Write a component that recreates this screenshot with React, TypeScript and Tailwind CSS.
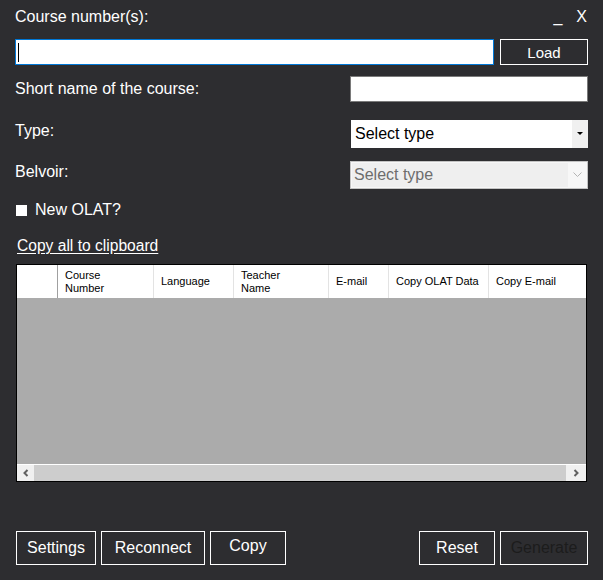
const font = { fontFamily: '"Liberation Sans", Arial, sans-serif' };

type Col = { label: string[]; w: string };

const columns: Col[] = [
  { label: ["Course", "Number"], w: "w-[96px]" },
  { label: ["Language"], w: "w-[80px]" },
  { label: ["Teacher", "Name"], w: "w-[95px]" },
  { label: ["E-mail"], w: "w-[60px]" },
  { label: ["Copy OLAT Data"], w: "w-[100px]" },
  { label: ["Copy E-mail"], w: "flex-1" },
];

function CourseGrid() {
  return (
    <div className="mt-[8px] ml-[1px] mr-[1px] flex h-[218px] flex-col border border-black bg-[#ababab]">
      <div className="flex h-[33px] bg-white text-[11px] leading-[13px] text-black">
        <div className="w-[41px] border-r border-[#a0a0a0]" />
        {columns.map((c) => (
          <div
            key={c.label.join(" ")}
            className={`${c.w} flex flex-col justify-center border-r border-[#e3e3e3] pl-[7px] last:border-r-0`}
          >
            {c.label.map((l) => (
              <span key={l}>{l}</span>
            ))}
          </div>
        ))}
      </div>
      <div className="flex-1" />
      <div className="h-px bg-white" />
      <div className="flex h-[16px] bg-[#cdcdcd]">
        <div className="flex w-[17px] items-center justify-center bg-[#f0f0f0]">
          <svg width="8" height="8" viewBox="0 0 8 8">
            <path d="M5.5 1 L2.5 4 L5.5 7" fill="none" stroke="#606060" strokeWidth="2" />
          </svg>
        </div>
        <div className="flex-1" />
        <div className="flex w-[20px] items-center justify-center bg-[#f0f0f0]">
          <svg width="8" height="8" viewBox="0 0 8 8">
            <path d="M2.5 1 L5.5 4 L2.5 7" fill="none" stroke="#606060" strokeWidth="2" />
          </svg>
        </div>
      </div>
    </div>
  );
}

function Btn({ children, w, dim, lift }: { children: string; w: string; dim?: boolean; lift?: boolean }) {
  return (
    <div
      className={`${w} flex h-[34px] items-center justify-center border border-white text-[16px] ${
        dim ? "text-[#1c1c1c]" : "text-white"
      } ${lift ? "pb-[4px]" : ""}`}
    >
      {children}
    </div>
  );
}

export default function App() {
  return (
    <div
      className="flex h-[580px] w-[603px] flex-col bg-[#2d2d30] pl-[15px] pr-[15px] text-[16px] leading-[20px] text-white"
      style={font}
    >
      <div className="mt-[7px] flex h-[20px] items-center justify-between">
        <span>Course number(s):</span>
        <div className="flex items-center gap-[14px] pr-[1px]">
          <span>_</span>
          <span>X</span>
        </div>
      </div>

      <div className="mt-[12px] flex h-[26px] gap-[6px]">
        <div className="flex flex-1 items-center border border-[#0078d7] bg-white pl-[2px]">
          <div className="h-[19px] w-px bg-black" />
        </div>
        <div className="flex w-[88px] items-center justify-center border border-white pt-[2px] text-[15px]">
          Load
        </div>
      </div>

      <div className="mt-[11px] flex h-[26px] items-center justify-between">
        <span>Short name of the course:</span>
        <div className="h-[26px] w-[238px] border border-[#7a7a7a] bg-white" />
      </div>

      <div className="mt-[18px] flex h-[28px] justify-between">
        <span className="mt-[1px]">Type:</span>
        <div className="flex w-[237px] bg-white">
          <span className="flex-1 pl-[4px] pt-[4px] text-black">Select type</span>
          <div className="flex w-[16px] items-center justify-center bg-[#f0f0f0]">
            <svg width="6" height="4" viewBox="0 0 6 4">
              <path d="M0 0 H6 L3 3 Z" fill="#000" />
            </svg>
          </div>
        </div>
      </div>

      <div className="mt-[13px] flex h-[28px] justify-between">
        <span className="mt-[1px]">Belvoir:</span>
        <div className="flex w-[238px] border border-[#c3c3c3] bg-[#f7f7f7] p-[1px]">
          <span className="w-[216px] bg-[#efefef] pl-[2px] pt-[2px] text-[#6d6d6d]">Select type</span>
          <div className="flex flex-1 items-center justify-center">
            <svg width="9" height="6" viewBox="0 0 9 6">
              <path d="M0.5 0.5 L4.5 4.5 L8.5 0.5" fill="none" stroke="#b4b4b4" strokeWidth="1" />
            </svg>
          </div>
        </div>
      </div>

      <div className="mt-[11px] flex h-[20px] items-center">
        <div className="ml-[1px] h-[11px] w-[11px] bg-white" />
        <span className="ml-[8px]">New OLAT?</span>
      </div>

      <div className="mt-[16px] h-[20px] pl-[2px]">
        <span className="text-[15.6px] underline underline-offset-[2px]">Copy all to clipboard</span>
      </div>

      <CourseGrid />

      <div className="mt-[49px] flex justify-between pl-[1px]">
        <div className="flex gap-[5px]">
          <Btn w="w-[80px]">Settings</Btn>
          <Btn w="w-[104px]">Reconnect</Btn>
          <Btn w="w-[76px]" lift>
            Copy
          </Btn>
        </div>
        <div className="flex gap-[5px]">
          <Btn w="w-[76px]">Reset</Btn>
          <Btn w="w-[88px]" dim>
            Generate
          </Btn>
        </div>
      </div>
    </div>
  );
}
